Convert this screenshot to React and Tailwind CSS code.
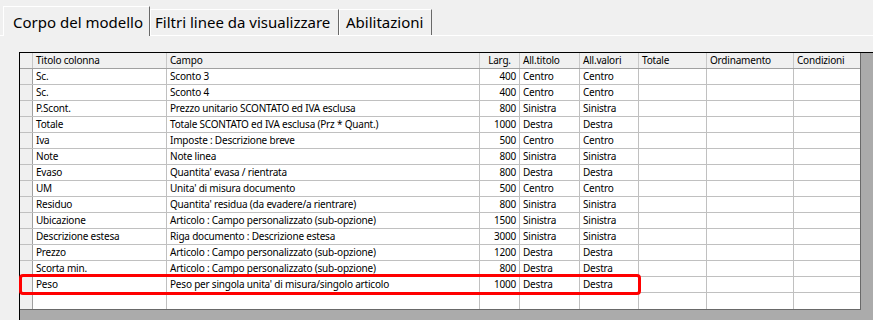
import React from 'react';

const columns = [
  { key: 'sel', title: '', width: 'w-[13px]' },
  { key: 'titolo', title: 'Titolo colonna', width: 'w-[134px]' },
  { key: 'campo', title: 'Campo', width: 'w-[313px]' },
  { key: 'larg', title: 'Larg.', width: 'w-[40px]', align: 'text-right', headAlign: 'text-center' },
  { key: 'allTitolo', title: 'All.titolo', width: 'w-[60px]' },
  { key: 'allValori', title: 'All.valori', width: 'w-[59px]' },
  { key: 'totale', title: 'Totale', width: 'w-[68px]' },
  { key: 'ordinamento', title: 'Ordinamento', width: 'w-[87px]' },
  { key: 'condizioni', title: 'Condizioni', width: 'w-[66px]' },
];

const rows = [
  ['Sc.', 'Sconto 3', '400', 'Centro', 'Centro'],
  ['Sc.', 'Sconto 4', '400', 'Centro', 'Centro'],
  ['P.Scont.', 'Prezzo unitario SCONTATO ed IVA esclusa', '800', 'Sinistra', 'Sinistra'],
  ['Totale', 'Totale SCONTATO ed IVA esclusa (Prz * Quant.)', '1000', 'Destra', 'Destra'],
  ['Iva', 'Imposte : Descrizione breve', '500', 'Centro', 'Centro'],
  ['Note', 'Note linea', '800', 'Sinistra', 'Sinistra'],
  ['Evaso', "Quantita' evasa / rientrata", '800', 'Destra', 'Destra'],
  ['UM', "Unita' di misura documento", '500', 'Centro', 'Centro'],
  ['Residuo', "Quantita' residua (da evadere/a rientrare)", '800', 'Sinistra', 'Sinistra'],
  ['Ubicazione', 'Articolo : Campo personalizzato (sub-opzione)', '1500', 'Sinistra', 'Sinistra'],
  ['Descrizione estesa', 'Riga documento : Descrizione estesa', '3000', 'Sinistra', 'Sinistra'],
  ['Prezzo', 'Articolo : Campo personalizzato (sub-opzione)', '1200', 'Destra', 'Destra'],
  ['Scorta min.', 'Articolo : Campo personalizzato (sub-opzione)', '800', 'Destra', 'Destra'],
  ['Peso', "Peso per singola unita' di misura/singolo articolo", '1000', 'Destra', 'Destra'],
  ['', '', '', '', ''],
];

function Tabs() {
  return (
    <div className="flex items-end h-[36px] pl-[3px] border-b border-white text-[15px] text-black">
      <div className="w-[147px] h-[30px] -mb-px bg-[#f0f0f0] border-l border-t border-white border-r border-r-[#696969] pl-[9px] pt-[5px] leading-[20px] whitespace-nowrap">
        Corpo del modello
      </div>
      <div className="w-[189px] h-[26px] border-l border-t border-white border-r border-r-[#696969] pl-[4px] pt-[2px] leading-[20px] whitespace-nowrap">
        Filtri linee da visualizzare
      </div>
      <div className="w-[93px] h-[26px] border-l border-t border-white border-r border-r-[#696969] pl-[6px] pt-[2px] leading-[20px] whitespace-nowrap">
        Abilitazioni
      </div>
    </div>
  );
}

function Grid() {
  return (
    <div className="relative h-full bg-[#ababab] border-t border-l border-black text-[10px] tracking-[-0.2px] text-black">
      <div className="flex flex-col w-max border-r border-b border-[#696969]">
        {/* header */}
        <div className="flex h-[16px] bg-[#f0f0f0] border-b border-[#a0a0a0]">
          {columns.map((col, i) => (
            <div
              key={col.key}
              className={`${col.width} h-full px-[3px] leading-[15px] whitespace-nowrap overflow-hidden ${col.headAlign || 'text-left'} ${i < columns.length - 1 ? 'border-r border-[#c8c8c8]' : ''}`}
            >
              {col.title}
            </div>
          ))}
        </div>
        {rows.map((row, r) => (
          <div key={r} className={`flex h-[16px] ${r < rows.length - 1 ? 'border-b border-[#c0c0c0]' : ''}`}>
            <div className="w-[13px] h-full bg-[#f0f0f0] border-r border-[#a0a0a0]" />
            {columns.slice(1).map((col, i) => {
              const value = i < row.length ? row[i] : '';
              return (
                <div
                  key={col.key}
                  className={`${col.width} h-full bg-white px-[3px] leading-[15px] whitespace-nowrap overflow-hidden ${col.align || 'text-left'} ${i < columns.length - 2 ? 'border-r border-[#c0c0c0]' : ''}`}
                >
                  {value}
                </div>
              );
            })}
          </div>
        ))}
      </div>
      {/* highlight on the Peso row */}
      <div className="absolute left-[-1px] top-[221px] w-[622px] h-[21px] border-[3px] border-[#ff0000] rounded-[4px] pointer-events-none" />
    </div>
  );
}

export default function App() {
  return (
    <div className="w-[873px] h-[320px] overflow-hidden bg-[#f0f0f0] flex flex-col font-['Segoe_UI','Noto_Sans',sans-serif]">
      <Tabs />
      <div className="flex-1 min-h-0 pt-[16px] pl-[19px]">
        <Grid />
      </div>
    </div>
  );
}
